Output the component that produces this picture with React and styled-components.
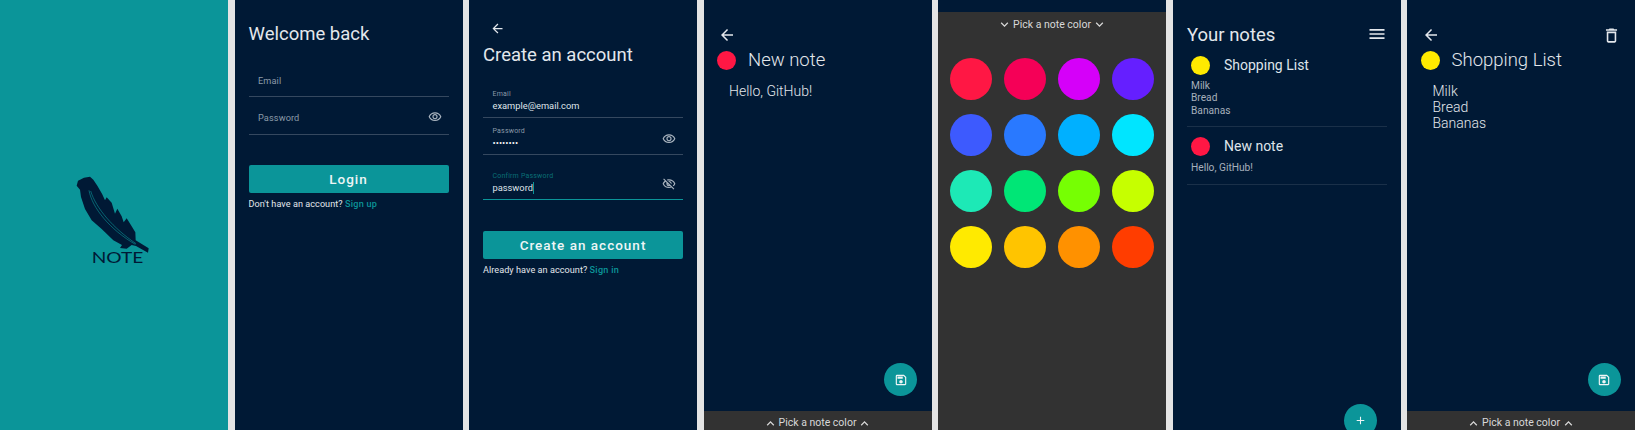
import React from "react";
import styled, { createGlobalStyle } from "styled-components";
import {
  MdArrowBack,
  MdOutlineVisibility,
  MdOutlineVisibilityOff,
  MdKeyboardArrowUp,
  MdKeyboardArrowDown,
  MdMenu,
  MdOutlineDelete,
  MdOutlineSave,
  MdAdd,
} from "react-icons/md";

const NAVY = "#001935";
const TEAL = "#0b9599";
const BAR = "#323232";

const Global = createGlobalStyle`
  html, body { margin: 0; padding: 0; background: #e4e4e4; }
  body { font-family: Roboto, "Liberation Sans", sans-serif; overflow: hidden; }
  * { box-sizing: border-box; }
`;

const Gallery = styled.div`
  display: grid;
  grid-template-columns: repeat(7, 1fr);
  column-gap: 6.5px;
  width: 1635px;
  height: 430px;
`;

const Panel = styled.section`
  position: relative;
  display: flex;
  flex-direction: column;
  height: 430px;
  overflow: hidden;
  background: ${NAVY};
  color: #e3e7ec;
`;

const Splash = styled(Panel)`
  background: ${TEAL};
  align-items: center;
  padding: 165px 0 0 0;
`;

const Logo = styled.svg`
  display: block;
  width: 100px;
  height: 105px;
  margin-left: -8px;
`;

const Form = styled.div`
  display: flex;
  flex-direction: column;
  padding: ${(p) => p.$top}px 14px 0 14px;
`;

const Heading = styled.h1`
  margin: ${(p) => p.$top || 0}px 0 0 0;
  font-size: 18.5px;
  font-weight: 400;
  line-height: 24px;
  color: #e3e7ec;
`;

const BackRow = styled.div`
  display: flex;
  align-items: center;
  justify-content: space-between;
  height: 16px;
  padding: 0 ${(p) => p.$right || 0}px 0 ${(p) => p.$left}px;
  margin-top: ${(p) => p.$top}px;
  color: #e3e7ec;
  font-size: ${(p) => p.$icon}px;
  line-height: 0;
`;

const TrashIcon = styled(MdOutlineDelete)`
  font-size: 19px;
`;

const Field = styled.div`
  display: flex;
  align-items: flex-end;
  justify-content: space-between;
  height: ${(p) => p.$h}px;
  margin-top: ${(p) => p.$mt || 0}px;
  padding: 0 7px ${(p) => (p.$filled ? 5 : 9.5)}px 9.5px;
  border-bottom: 1px solid ${(p) => (p.$active ? TEAL : "#35485f")};
`;

const FieldText = styled.div`
  display: flex;
  flex-direction: column;
`;

const Placeholder = styled.span`
  font-size: 9.2px;
  line-height: 12px;
  letter-spacing: 0.1px;
  color: #8b99a8;
`;

const FloatLabel = styled.span`
  font-size: 7px;
  line-height: 10px;
  letter-spacing: 0.2px;
  margin-bottom: 1px;
  color: ${(p) => (p.$active ? "#0a6f76" : "#8b99a8")};
`;

const Value = styled.span`
  font-size: 9.3px;
  line-height: 12px;
  color: #dfe4ea;
`;

const Dots = styled(Value)`
  font-size: 9.5px;
  color: #f2f4f6;
`;

const Caret = styled.span`
  display: inline-block;
  width: 1px;
  height: 12px;
  margin-left: 0.5px;
  vertical-align: top;
  background: ${TEAL};
`;

const EyeSlot = styled.span`
  display: flex;
  color: #a9b4bf;
  font-size: 14px;
  margin-bottom: ${(p) => p.$mb || 0}px;
`;

const Button = styled.button`
  height: 27.5px;
  margin-top: ${(p) => p.$top}px;
  border: 0;
  border-radius: 2px;
  background: ${TEAL};
  color: #eef5f6;
  font: 500 13.5px/27.5px Roboto, sans-serif;
  letter-spacing: 1px;
`;

const Hint = styled.p`
  margin: 5.5px 0 0 0;
  font-size: 9.1px;
  line-height: 12px;
  letter-spacing: 0.05px;
  color: #e3e7ec;
`;

const Link = styled.span`
  color: ${TEAL};
  font-weight: 500;
  letter-spacing: 0.25px;
`;

const NoteHead = styled.div`
  display: flex;
  align-items: center;
  gap: 12px;
  padding-left: 13.5px;
  margin-top: ${(p) => p.$top}px;
  font-size: 18.5px;
  font-weight: 300;
  line-height: 24px;
  color: #e3e7ec;
`;

const Dot = styled.span`
  flex: none;
  width: 19px;
  height: 19px;
  border-radius: 50%;
  background: ${(p) => p.$c};
`;

const NoteBody = styled.div`
  padding-left: 25.5px;
  margin-top: 11px;
  font-size: 14px;
  font-weight: 300;
  line-height: 16px;
  color: #e3e7ec;
`;

const Spacer = styled.div`
  flex: 1;
`;

const ColorBar = styled.div`
  display: flex;
  align-items: center;
  justify-content: center;
  gap: 1px;
  flex: none;
  height: 19px;
  padding-top: 5px;
  background: ${BAR};
  color: #d8d8d8;
  font-size: 10.5px;
  line-height: 14px;
`;

const Chev = styled.span`
  display: flex;
  font-size: 15px;
`;

const Fab = styled.button`
  position: absolute;
  right: ${(p) => p.$right}px;
  bottom: ${(p) => p.$bottom}px;
  display: flex;
  align-items: center;
  justify-content: center;
  width: 33px;
  height: 33px;
  padding: 0;
  border: 0;
  border-radius: 50%;
  background: ${TEAL};
  color: #eef5f6;
  font-size: ${(p) => p.$icon}px;
`;

const Picker = styled(Panel)`
  background: ${BAR};
`;

const PickerTop = styled.div`
  height: 12px;
  background: ${NAVY};
`;

const PickerTitle = styled.div`
  display: flex;
  align-items: center;
  justify-content: center;
  gap: 1px;
  height: 24px;
  color: #d8d8d8;
  font-size: 10.5px;
`;

const Swatches = styled.div`
  display: grid;
  grid-template-columns: repeat(4, 42px);
  grid-auto-rows: 42px;
  column-gap: 12px;
  row-gap: 14px;
  padding: 22px 0 0 12px;
`;

const Swatch = styled.span`
  border-radius: 50%;
  background: ${(p) => p.$c};
`;

const ListHead = styled.div`
  display: flex;
  align-items: center;
  justify-content: space-between;
  height: 24px;
  margin-top: 23px;
  padding: 0 14px 0 14.5px;
  font-size: 18.5px;
  font-weight: 400;
  color: #e3e7ec;
`;

const MenuSlot = styled.span`
  display: flex;
  font-size: 20px;
  margin-top: -3px;
`;

const NoteItem = styled.article`
  margin: 0 14px;
  padding: ${(p) => (p.$first ? 8.5 : 10)}px 0 9.5px 0;
  border-bottom: 1px solid #1a3049;
`;

const ItemHead = styled.div`
  display: flex;
  align-items: center;
  gap: 14px;
  padding-left: 4.5px;
  font-size: 14px;
  line-height: 19px;
  color: #dfe4ea;
`;

const ItemBody = styled.div`
  margin-top: 5.5px;
  padding-left: 4.5px;
  font-size: 10.2px;
  line-height: 12.3px;
  color: #a6b0bc;
`;

const swatches = [
  "#ff1744", "#f50057", "#d500f9", "#651fff",
  "#3d5afe", "#2979ff", "#00b0ff", "#00e5ff",
  "#1de9b6", "#00e676", "#76ff03", "#c6ff00",
  "#ffea00", "#ffc400", "#ff9100", "#ff3d00",
];

function FeatherLogo() {
  return (
    <Logo viewBox="0 0 300 315" aria-label="Note logo">
      <path
        fill={NAVY}
        d="M50 62 L54 47 L72 38 L90 35 L100 44 L112 62 L126 86 L135 106 L140 97 L155 113 L165 146 L172 131 L185 154 L191 172 L200 160 L215 184 L226 202 L227 226 L266 250 L264 263 L228 243 L215 240 L200 251 L180 249 L186 240 L160 226 L125 192 L95 166 L75 132 L63 96 L60 74 Z"
      />
      <path
        fill="none"
        stroke={TEAL}
        strokeWidth="1.8"
        d="M87 76 C96 128 150 194 226 238 M92 78 C108 130 160 190 228 236"
      />
      <text
        x="95"
        y="294"
        fill={NAVY}
        fontFamily="Lato, sans-serif"
        fontSize="44"
        fontWeight="400"
        textLength="155"
        lengthAdjust="spacingAndGlyphs"
      >
        NOTE
      </text>
    </Logo>
  );
}

function ColorPickerBar() {
  return (
    <ColorBar>
      <Chev><MdKeyboardArrowUp /></Chev>
      <span>Pick a note color</span>
      <Chev><MdKeyboardArrowUp /></Chev>
    </ColorBar>
  );
}

export default function App() {
  return (
    <>
      <Global />
      <Gallery>
        <Splash>
          <FeatherLogo />
        </Splash>

        <Panel>
          <Form $top={22}>
            <Heading>Welcome back</Heading>
            <Field $h={37} $mt={14}>
              <Placeholder>Email</Placeholder>
            </Field>
            <Field $h={37.5}>
              <Placeholder>Password</Placeholder>
              <EyeSlot><MdOutlineVisibility /></EyeSlot>
            </Field>
            <Button $top={30.5}>Login</Button>
            <Hint>
              Don't have an account? <Link>Sign up</Link>
            </Hint>
          </Form>
        </Panel>

        <Panel>
          <BackRow $top={20} $left={20.5} $icon={15}><MdArrowBack /></BackRow>
          <Form $top={7}>
            <Heading>Create an account</Heading>
            <Field $h={51} $filled>
              <FieldText>
                <FloatLabel>Email</FloatLabel>
                <Value>example@email.com</Value>
              </FieldText>
            </Field>
            <Field $h={37} $filled>
              <FieldText>
                <FloatLabel>Password</FloatLabel>
                <Dots>••••••••</Dots>
              </FieldText>
              <EyeSlot $mb={3}><MdOutlineVisibility /></EyeSlot>
            </Field>
            <Field $h={37} $mt={8} $filled $active>
              <FieldText>
                <FloatLabel $active>Confirm Password</FloatLabel>
                <Value>password<Caret /></Value>
              </FieldText>
              <EyeSlot $mb={3}><MdOutlineVisibilityOff /></EyeSlot>
            </Field>
            <Button $top={31}>Create an account</Button>
            <Hint>
              Already have an account? <Link>Sign in</Link>
            </Hint>
          </Form>
        </Panel>

        <Panel>
          <BackRow $top={27} $left={14.5} $icon={18}><MdArrowBack /></BackRow>
          <NoteHead $top={5}>
            <Dot $c="#ff1744" />
            New note
          </NoteHead>
          <NoteBody>Hello, GitHub!</NoteBody>
          <Spacer />
          <Fab $right={14.5} $bottom={34} $icon={14}><MdOutlineSave /></Fab>
          <ColorPickerBar />
        </Panel>

        <Picker>
          <PickerTop />
          <PickerTitle>
            <Chev><MdKeyboardArrowDown /></Chev>
            <span>Pick a note color</span>
            <Chev><MdKeyboardArrowDown /></Chev>
          </PickerTitle>
          <Swatches>
            {swatches.map((c) => <Swatch key={c} $c={c} />)}
          </Swatches>
        </Picker>

        <Panel>
          <ListHead>
            Your notes
            <MenuSlot><MdMenu /></MenuSlot>
          </ListHead>
          <NoteItem $first>
            <ItemHead>
              <Dot $c="#ffea00" />
              Shopping List
            </ItemHead>
            <ItemBody>Milk<br />Bread<br />Bananas</ItemBody>
          </NoteItem>
          <NoteItem>
            <ItemHead>
              <Dot $c="#ff1744" />
              New note
            </ItemHead>
            <ItemBody>Hello, GitHub!</ItemBody>
          </NoteItem>
          <Fab $right={23.3} $bottom={-7} $icon={13}><MdAdd /></Fab>
        </Panel>

        <Panel>
          <BackRow $top={27} $left={14.5} $right={14} $icon={18}>
            <MdArrowBack />
            <TrashIcon />
          </BackRow>
          <NoteHead $top={5}>
            <Dot $c="#ffea00" />
            Shopping List
          </NoteHead>
          <NoteBody>Milk<br />Bread<br />Bananas</NoteBody>
          <Spacer />
          <Fab $right={14.5} $bottom={34} $icon={14}><MdOutlineSave /></Fab>
          <ColorPickerBar />
        </Panel>
      </Gallery>
    </>
  );
}
